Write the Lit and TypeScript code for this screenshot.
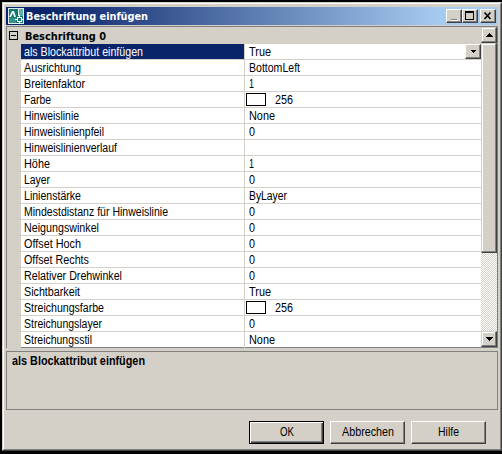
import { LitElement, html, css, svg } from 'lit';
import { customElement } from 'lit/decorators.js';
import { styleMap } from 'lit/directives/style-map.js';

interface Prop { name: string; w: number; value: string; vw: number; color?: boolean }

const PROPS: Prop[] = [
  { name: 'als Blockattribut einfügen', w: 119, value: 'True', vw: 22 },
  { name: 'Ausrichtung', w: 57, value: 'BottomLeft', vw: 51 },
  { name: 'Breitenfaktor', w: 61, value: '1', vw: 5 },
  { name: 'Farbe', w: 27, value: '256', vw: 18, color: true },
  { name: 'Hinweislinie', w: 55, value: 'None', vw: 26 },
  { name: 'Hinweislinienpfeil', w: 80, value: '0', vw: 6 },
  { name: 'Hinweislinienverlauf', w: 93, value: '', vw: 0 },
  { name: 'Höhe', w: 26, value: '1', vw: 5 },
  { name: 'Layer', w: 26, value: '0', vw: 6 },
  { name: 'Linienstärke', w: 57, value: 'ByLayer', vw: 38 },
  { name: 'Mindestdistanz für Hinweislinie', w: 144, value: '0', vw: 6 },
  { name: 'Neigungswinkel', w: 75, value: '0', vw: 6 },
  { name: 'Offset Hoch', w: 57, value: '0', vw: 6 },
  { name: 'Offset Rechts', w: 65, value: '0', vw: 6 },
  { name: 'Relativer Drehwinkel', w: 98, value: '0', vw: 6 },
  { name: 'Sichtbarkeit', w: 56, value: 'True', vw: 22 },
  { name: 'Streichungsfarbe', w: 80, value: '256', vw: 18, color: true },
  { name: 'Streichungslayer', w: 78, value: '0', vw: 6 },
  { name: 'Streichungsstil', w: 68, value: 'None', vw: 26 },
];

const label = (text: string, width: number, cls = '') => html`
  <svg class="label ${cls}" style=${styleMap({ width: `${width}px` })} height="16">
    ${text ? svg`<text x="0" y="12" textLength=${width} lengthAdjust="spacingAndGlyphs">${text}</text>` : ''}
  </svg>`;

const arrow = (down: boolean, size = 4) => {
  const rows = Array.from({ length: size }, (_, i) => (down ? size - 1 - i : i));
  return html`<svg width=${size * 2 - 1} height=${size} shape-rendering="crispEdges">
    ${rows.map((n, y) => svg`<rect x=${size - 1 - n} y=${y} width=${n * 2 + 1} height="1" />`)}
  </svg>`;
};

@customElement('app-root')
export class AppRoot extends LitElement {
  static styles = css`
    :host { display: block; width: 502px; height: 454px; background: #000; padding: 2px 0 3px 2px;
      box-sizing: border-box; overflow: hidden; font: 11px "Liberation Sans", sans-serif; color: #000; }
    * { box-sizing: border-box; }
    svg { display: block; flex: none; }
    .label { overflow: visible; fill: currentColor; font-size: 12px; }
    .bold { font-weight: bold; }
    .heading { font-family: "DejaVu Sans Condensed", "DejaVu Sans", sans-serif; font-weight: bold; font-size: 11px; }
    .window { height: 449px; background: #d4d0c8; border: 1px solid; border-color: #d4d0c8 #404040 #404040 #d4d0c8; }
    .frame { height: 447px; border: 1px solid; border-color: #fff #808080 #808080 #fff; padding: 3px 2px 0 2px; }
    .title { height: 18px; display: flex; align-items: center; color: #fff; padding: 0 2px 0 2px;
      background: linear-gradient(90deg, #0a246a 0, #0a246a 8%, #a6caf0 88%); }
    .title .label { margin: 0 auto 0 2px; }
    .btn { background: #d4d0c8; border: 1px solid; border-color: #fff #404040 #404040 #fff;
      box-shadow: inset -1px -1px #808080; display: flex; align-items: center; justify-content: center; flex: none; }
    .cap { width: 16px; height: 14px; }
    .close { margin-left: 2px; }
    .grid { height: 322px; margin-top: 1px; border: 1px solid #808080; display: flex; background: #fff; }
    .main { width: 474px; }
    .group { height: 17px; background: #d4d0c8; display: flex; align-items: center; padding-left: 2px; gap: 7px; }
    .body { display: flex; }
    .gutter { width: 14px; background: #d4d0c8; }
    .rows { flex: 1; }
    .row { height: 16px; display: flex; border-bottom: 1px solid #d4d0c8; }
    .row:last-child { border-bottom: 0; }
    .name { width: 223px; padding-left: 3px; }
    .selected .name { background: #0a246a; color: #fff; }
    .value { flex: 1; border-left: 1px solid #d4d0c8; padding-left: 4px; display: flex; }
    .value.color { padding-left: 1px; }
    .swatch { width: 20px; height: 13px; margin: 1px 9px 0 0; border: 1px solid #000; background: #fff; }
    .drop { width: 16px; height: 15px; margin-left: auto; }
    .scroll { width: 16px; display: flex; flex-direction: column;
      background: repeating-conic-gradient(#d4d0c8 0 25%, #fff 0 50%) 0 0 / 2px 2px; }
    .scroll .btn { width: 16px; height: 16px; border-color: #d4d0c8 #404040 #404040 #d4d0c8;
      box-shadow: inset -1px -1px #808080, inset 1px 1px #fff; }
    .scroll .thumb { height: 210px; margin-bottom: auto; }
    .info { height: 59px; margin-top: 3px; border: 1px solid #808080; padding: 1px 0 0 5px; }
    .actions { display: flex; justify-content: flex-end; gap: 6px; padding: 11px 12px 0 0; }
    .action { width: 75px; height: 23px; padding-bottom: 1px; }
    .default { border-color: #000; box-shadow: inset 1px 1px #fff, inset -1px -1px #404040, inset -2px -2px #808080; }
  `;

  render() {
    return html`
      <div class="window"><div class="frame">
        <div class="title">
          <svg width="16" height="16" viewBox="0 0 16 16" shape-rendering="crispEdges">
            <rect width="16" height="16" fill="#dcece9" />
            <path d="M1 1H10V14H1Z" fill="#16766f" />
            <path d="M11 1H15V8H11Z" fill="#63b0a4" />
            <path d="M1 9L4 3H6L8 9H6L5 5L3 9Z" fill="#e8fff8" shape-rendering="auto" />
            <path d="M1 10H8V15H1Z" fill="#3a938a" />
            <path d="M8 8H15V15H8Z" fill="#16766f" />
            <path d="M7 11.500H16M11.500 7V16" stroke="#fff" fill="none" />
            <rect x="9.500" y="9.500" width="4" height="4" fill="#16766f" stroke="#fff" />
          </svg>
          ${label('Beschriftung einfügen', 122, 'heading')}
          <div class="btn cap"><svg width="12" height="10" shape-rendering="crispEdges">
            <rect x="3" y="8" width="6" height="2" fill="#808080" /><rect x="3" y="9" width="7" height="1" fill="#fff" /></svg></div>
          <div class="btn cap"><svg width="12" height="10" shape-rendering="crispEdges">
            <path d="M1 0H10V9H1ZM2 2V8H9V2Z" fill-rule="evenodd" /></svg></div>
          <div class="btn cap close"><svg width="12" height="10">
            <path d="M2.500 1.500L8.500 8M8.500 1.500L2.500 8" stroke="#000" stroke-width="1.600" /></svg></div>
        </div>
        <div class="grid">
          <div class="main">
            <div class="group">
              <svg width="9" height="9" shape-rendering="crispEdges">
                <rect x=".5" y=".5" width="8" height="8" fill="none" stroke="#000" /><path d="M2 4H7V5H2Z" /></svg>
              ${label('Beschriftung 0', 81, 'heading')}
            </div>
            <div class="body">
              <div class="gutter"></div>
              <div class="rows">
                ${PROPS.map((p, i) => html`
                  <div class="row ${i === 0 ? 'selected' : ''}">
                    <div class="name">${label(p.name, p.w)}</div>
                    <div class="value ${p.color ? 'color' : ''}">
                      ${p.color ? html`<div class="swatch"></div>` : ''}
                      ${label(p.value, p.vw)}
                      ${i === 0 ? html`<div class="btn drop">${arrow(true, 3)}</div>` : ''}
                    </div>
                  </div>`)}
              </div>
            </div>
          </div>
          <div class="scroll">
            <div class="btn">${arrow(false)}</div>
            <div class="btn thumb"></div>
            <div class="btn">${arrow(true)}</div>
          </div>
        </div>
        <div class="info">${label('als Blockattribut einfügen', 133, 'bold')}</div>
        <div class="actions">
          <div class="btn action default">${label('OK', 14)}</div>
          <div class="btn action">${label('Abbrechen', 52)}</div>
          <div class="btn action">${label('Hilfe', 21)}</div>
        </div>
      </div></div>`;
  }
}
